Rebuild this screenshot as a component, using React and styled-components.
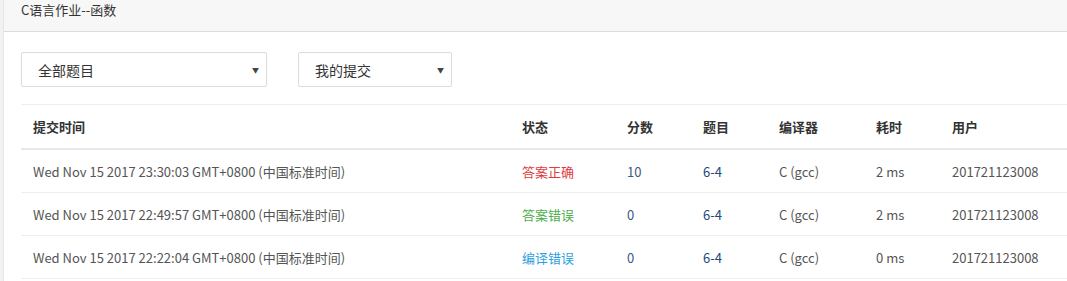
import styled, { createGlobalStyle } from 'styled-components';

const GlobalStyle = createGlobalStyle`
  html, body {
    margin: 0;
    padding: 0;
    background: #fff;
  }
  body {
    font-family: "Noto Sans CJK SC", "Noto Sans", sans-serif;
    color: #333;
  }
`;

const columns = [
  { title: '提交时间', width: 489 },
  { title: '状态', width: 105 },
  { title: '分数', width: 76 },
  { title: '题目', width: 76 },
  { title: '编译器', width: 97 },
  { title: '耗时', width: 76 },
  { title: '用户', width: 140 },
];

const rows = [
  { time: 'Wed Nov 15 2017 23:30:03 GMT+0800 (中国标准时间)', status: '答案正确', kind: 'ok', score: 10, problem: '6-4', compiler: 'C (gcc)', cost: '2 ms', user: '201721123008' },
  { time: 'Wed Nov 15 2017 22:49:57 GMT+0800 (中国标准时间)', status: '答案错误', kind: 'wrong', score: 0, problem: '6-4', compiler: 'C (gcc)', cost: '2 ms', user: '201721123008' },
  { time: 'Wed Nov 15 2017 22:22:04 GMT+0800 (中国标准时间)', status: '编译错误', kind: 'ce', score: 0, problem: '6-4', compiler: 'C (gcc)', cost: '0 ms', user: '201721123008' },
];

const statusColors = {
  ok: '#e0393e',
  wrong: '#4cae4c',
  ce: '#2d9fe0',
};

const App = () => {
  return (
    <Page>
      <GlobalStyle />
      <Panel>
        <Heading>C语言作业--函数</Heading>
        <Body>
          <Filters>
            <Select width={246}>
              <span>全部题目</span>
              <Caret>▼</Caret>
            </Select>
            <Select width={154}>
              <span>我的提交</span>
              <Caret>▼</Caret>
            </Select>
          </Filters>

          <Table>
            <colgroup>
              {columns.map(col => (
                <Col key={col.title} width={col.width} />
              ))}
            </colgroup>
            <thead>
              <tr>
                {columns.map(col => (
                  <th key={col.title}>{col.title}</th>
                ))}
              </tr>
            </thead>
            <tbody>
              {rows.map(row => (
                <tr key={row.time}>
                  <td>{row.time}</td>
                  <td>
                    <Status kind={row.kind}>{row.status}</Status>
                  </td>
                  <td>
                    <Score>{row.score}</Score>
                  </td>
                  <td>
                    <Problem>{row.problem}</Problem>
                  </td>
                  <td>{row.compiler}</td>
                  <td>{row.cost}</td>
                  <td>{row.user}</td>
                </tr>
              ))}
            </tbody>
          </Table>
        </Body>
      </Panel>
    </Page>
  );
};

export default App;

const Page = styled.div`
  background: #f2f2f2;
  padding-left: 3px;
  height: 281px;
  overflow: hidden;
`;

const Panel = styled.div`
  background: #fff;
  border-left: 1px solid #e6e6e6;
  height: 100%;
`;

const Heading = styled.div`
  height: 32px;
  box-sizing: border-box;
  background: #f7f7f7;
  border-bottom: 1px solid #dcdcdc;
  padding: 0 0 0 17px;
  font-size: 13px;
  line-height: 20px;
  color: #333;
`;

const Body = styled.div`
  padding: 20px 0 0 17px;
`;

const Filters = styled.div`
  display: flex;
  gap: 31px;
  margin-bottom: 17px;
`;

const Select = styled.div`
  width: ${p => p.width}px;
  height: 35px;
  box-sizing: border-box;
  border: 1px solid #dcdcdc;
  border-radius: 2px;
  display: flex;
  align-items: center;
  justify-content: space-between;
  padding: 0 7px 0 16px;
  font-size: 14px;
  color: #333;
`;

const Caret = styled.span`
  font-size: 7px;
  color: #444;
`;

const Col = styled.col`
  width: ${p => p.width}px;
`;

const Table = styled.table`
  border-collapse: collapse;
  table-layout: fixed;
  width: 1059px;
  font-size: 13px;
  color: #555;
  border-top: 1px solid #eee;

  th {
    text-align: left;
    font-weight: bold;
    color: #333;
    height: 43px;
    padding: 0 12px;
    border-bottom: 2px solid #e8e8e8;
  }

  td {
    height: 42px;
    padding: 0 12px;
    border-bottom: 1px solid #eee;
    white-space: nowrap;
  }
`;

const Status = styled.span`
  color: ${p => statusColors[p.kind]};
`;

const Score = styled.span`
  color: #3a5a80;
`;

const Problem = styled.span`
  color: #23487c;
`;
